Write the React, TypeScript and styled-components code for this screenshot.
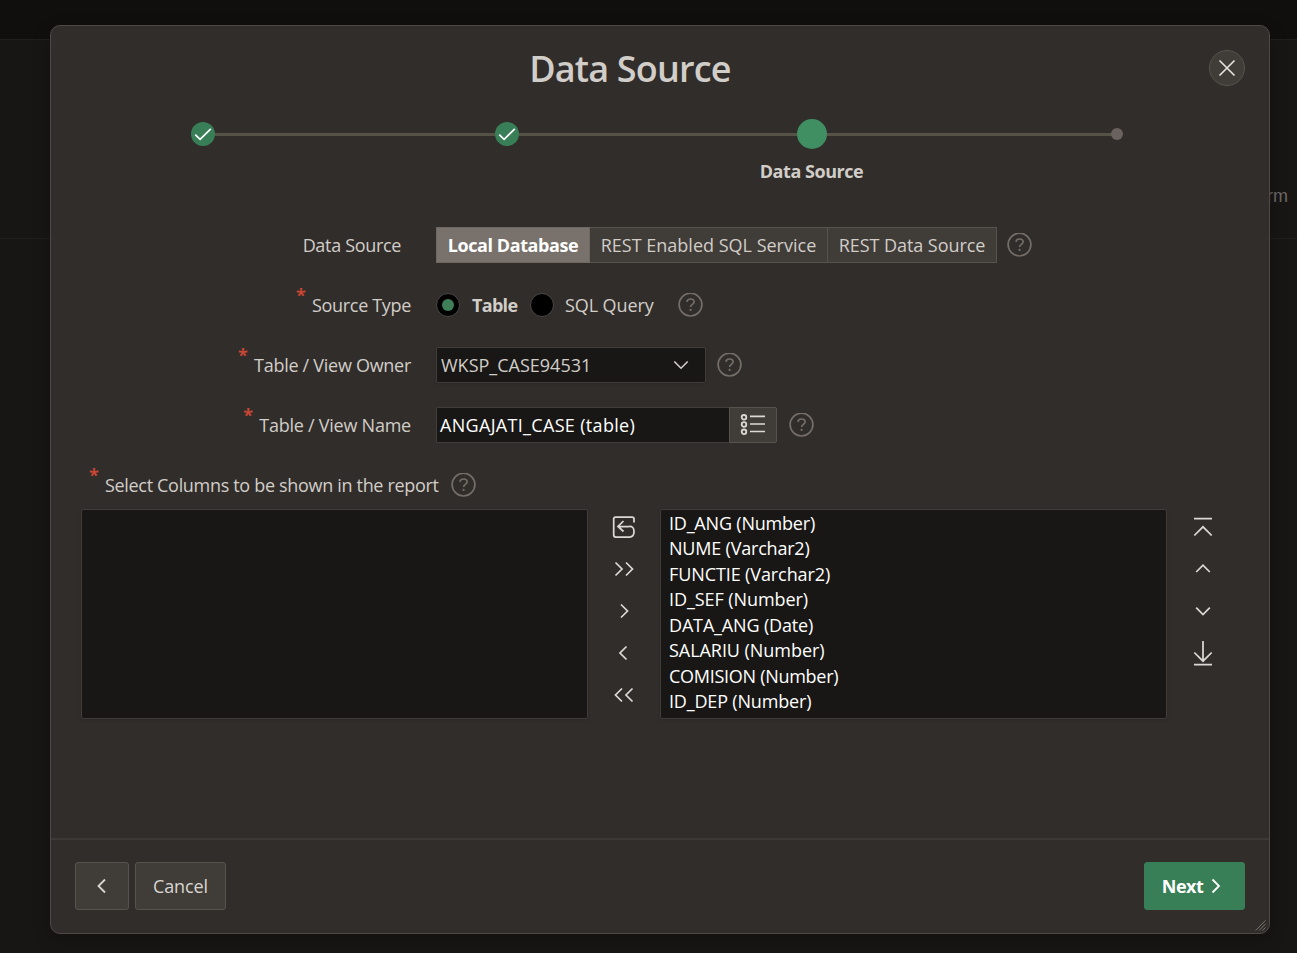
import React from 'react';
import styled, { createGlobalStyle, css } from 'styled-components';

const GlobalStyle = createGlobalStyle`
  * { box-sizing: border-box; }
  html, body, #root { margin: 0; height: 100%; }
  body {
    background: #171513;
    color: #d1cdc9;
    font-family: "Open Sans", "Noto Sans", sans-serif;
    font-size: 18px;
    overflow: hidden;
  }
  button, input { font: inherit; color: inherit; }
`;

const Screen = styled.div`
  position: relative;
  width: 1297px;
  height: 953px;
  overflow: hidden;
  background: #181614;
`;

const TopBar = styled.div`
  height: 40px;
  background: #110f0d;
  border-bottom: 1px solid #211f1d;
`;

const Banner = styled.div`
  height: 199px;
  padding: 0 9px 32px 0;
  display: flex;
  align-items: flex-end;
  justify-content: flex-end;
  border-bottom: 1px solid #211f1d;
  color: #6c6865;
  font-family: "Liberation Sans", Arial, sans-serif;
`;

const BannerText = styled.span`
  line-height: 20px;
`;

const Dialog = styled.section`
  position: absolute;
  left: 50px;
  top: 25px;
  width: 1220px;
  height: 909px;
  display: flex;
  flex-direction: column;
  border: 1px solid #4f4845;
  border-radius: 10px;
  background: #312d2a;
  box-shadow: 0 6px 18px rgba(0, 0, 0, 0.22);
`;

const Header = styled.header`
  display: flex;
  align-items: center;
  gap: 24px;
  height: 84px;
  padding: 0 24px;
`;

const Title = styled.h1`
  flex: 1;
  margin: 0;
  padding-top: 2px;
  text-align: center;
  font-size: 36px;
  font-weight: 600;
  line-height: 48px;
  letter-spacing: -0.82px;
`;

const CloseButton = styled.button`
  width: 36px;
  height: 36px;
  padding: 0;
  display: grid;
  place-items: center;
  border: 1px solid #57534c;
  border-radius: 50%;
  background: #403c37;
  color: #e2dfdc;
`;

const Steps = styled.ol`
  display: grid;
  grid-template-columns: 304px 304px 305px 305px;
  margin: 8px 0 0;
  padding: 0;
  list-style: none;
`;

const Step = styled.li`
  display: flex;
  flex-direction: column;
  align-items: center;
  gap: 9px;
`;

const Track = styled.div`
  display: flex;
  align-items: center;
  width: 100%;
  height: 32px;
`;

const Line = styled.span<{ $hidden?: boolean }>`
  flex: 1;
  height: 3px;
  margin: 1px -1px 0;
  background: ${(p) => (p.$hidden ? 'transparent' : '#565248')};
`;

const markerLook = {
  done: css`width: 24px; height: 24px; background: #387f57;`,
  current: css`width: 30px; height: 30px; background: #3f8f63;`,
  todo: css`width: 12px; height: 12px; background: #6a625e;`,
};

const Marker = styled.span<{ $state: keyof typeof markerLook }>`
  z-index: 1;
  display: grid;
  place-items: center;
  border-radius: 50%;
  color: #fff;
  ${(p) => markerLook[p.$state]}
`;

const StepLabel = styled.span`
  font-weight: 700;
  line-height: 24px;
  letter-spacing: -0.45px;
`;

const Form = styled.div`
  flex: 1;
  padding-top: 32px;
`;

const Field = styled.div`
  display: grid;
  grid-template-columns: 360px 1fr;
  column-gap: 25px;
  height: 60px;
`;

const LabelCell = styled.div<{ $inset?: number }>`
  display: flex;
  align-items: center;
  justify-content: flex-end;
  gap: 6px;
  padding-right: ${(p) => p.$inset ?? 0}px;
`;

const Label = styled.span<{ $spacing?: number }>`
  white-space: nowrap;
  line-height: 24px;
  letter-spacing: ${(p) => p.$spacing ?? 0}px;
`;

const Required = styled.span`
  align-self: flex-start;
  padding-top: 7px;
  width: 10px;
  color: #c74634;
  font-size: 18px;
  font-weight: 700;
  line-height: 26px;
`;

const Control = styled.div<{ $gap: number }>`
  display: flex;
  align-items: center;
  gap: ${(p) => p.$gap}px;
`;

const Segments = styled.div`
  display: flex;
  height: 36px;
`;

const Segment = styled.button<{ $width: number; $spacing?: number; $active?: boolean }>`
  width: ${(p) => p.$width}px;
  padding: 0;
  white-space: nowrap;
  line-height: 24px;
  letter-spacing: ${(p) => p.$spacing ?? 0}px;
  border: 1px solid #57534c;
  background: #403c37;
  & + & { border-left-width: 0; }
  ${(p) =>
    p.$active &&
    css`
      border-color: #6f6761;
      background: #79716b;
      color: #fff;
      font-weight: 700;
    `}
`;

const RadioOption = styled.label<{ $width: number; $selected?: boolean; $spacing?: number }>`
  display: flex;
  align-items: center;
  gap: ${(p) => (p.$selected ? 12 : 11)}px;
  width: ${(p) => p.$width}px;
  white-space: nowrap;
  line-height: 24px;
  font-weight: ${(p) => (p.$selected ? 700 : 400)};
  letter-spacing: ${(p) => p.$spacing ?? 0}px;
`;

const RadioMark = styled.span<{ $selected?: boolean }>`
  flex: none;
  display: grid;
  place-items: center;
  width: 24px;
  height: 24px;
  border: 1px solid #4d4845;
  border-radius: 50%;
  background: #000;
  &::after {
    content: '';
    width: 12px;
    height: 12px;
    border-radius: 50%;
    background: ${(p) => (p.$selected ? '#3f8059' : 'transparent')};
  }
`;

const SelectBox = styled.div`
  display: flex;
  align-items: center;
  justify-content: space-between;
  width: 270px;
  height: 36px;
  padding: 0 16px 0 4px;
  border: 1px solid #413d3a;
  border-radius: 2px;
  background: #191715;
  box-shadow: 0 1px 3px rgba(0, 0, 0, 0.14);
`;

const InputGroup = styled.div`
  display: flex;
  width: 341px;
  height: 36px;
`;

const ValueBox = styled.div`
  flex: 1;
  padding: 0 3px;
  border: 1px solid #413d3a;
  border-right: 0;
  border-radius: 2px 0 0 2px;
  background: #191715;
  color: #fff;
  line-height: 34px;
  letter-spacing: 0.32px;
  white-space: nowrap;
`;

const LovButton = styled.button`
  width: 48px;
  padding: 0;
  display: grid;
  place-items: center;
  border: 1px solid #57534c;
  border-radius: 0 2px 2px 0;
  background: #403c37;
`;

const ShuttleHeading = styled.div`
  display: flex;
  align-items: center;
  gap: 6px;
  height: 60px;
  padding-left: 38px;
`;

const HelpSlot = styled.span`
  display: flex;
  margin-left: 6px;
`;

const Shuttle = styled.div`
  display: flex;
  height: 210px;
  margin-top: -6px;
  padding-left: 30px;
`;

const ListBox = styled.ul`
  width: 507px;
  margin: 0;
  padding: 0.75px 8px;
  list-style: none;
  border: 1px solid #403c39;
  border-radius: 2px;
  background: #191715;
  color: #fff;
  box-shadow: 0 1px 3px rgba(0, 0, 0, 0.14);
`;

const Option = styled.li<{ $spacing?: number }>`
  height: 25.5px;
  line-height: 25.5px;
  white-space: nowrap;
  letter-spacing: ${(p) => p.$spacing ?? 0}px;
`;

const ButtonColumn = styled.div`
  display: flex;
  flex-direction: column;
  width: 72px;
`;

const IconButton = styled.button`
  display: grid;
  place-items: center;
  width: 100%;
  height: 42px;
  padding: 1px 0 0;
  border: 0;
  background: none;
  color: #dcd8d4;
  &:first-child { height: 38px; padding: 0 0 3px; }
`;

const Footer = styled.footer`
  display: flex;
  align-items: center;
  gap: 6px;
  height: 95px;
  padding: 0 24px 2px;
  border-top: 2px solid #3c3835;
`;

const FooterButton = styled.button<{ $width: number; $primary?: boolean }>`
  display: flex;
  align-items: center;
  justify-content: center;
  gap: 8px;
  width: ${(p) => p.$width}px;
  height: 48px;
  padding: 0 ${(p) => (p.$primary ? 6 : 0)}px 0 0;
  border: 1px solid ${(p) => (p.$primary ? '#387f57' : '#57534c')};
  border-radius: 3px;
  background: ${(p) => (p.$primary ? '#387f57' : '#403c37')};
  color: ${(p) => (p.$primary ? '#fff' : '#d9d5d1')};
  font-weight: ${(p) => (p.$primary ? 700 : 400)};
  letter-spacing: ${(p) => (p.$primary ? -0.5 : -0.1)}px;
  margin-left: ${(p) => (p.$primary ? 'auto' : '0')};
`;

const ResizeGrip = styled.div`
  position: absolute;
  right: 1px;
  bottom: 1px;
  display: flex;
`;

type GlyphProps = { w: number; h: number; d: string; stroke?: number };

const Glyph = ({ w, h, d, stroke = 1.75 }: GlyphProps) => (
  <svg width={w} height={h} viewBox={`0 0 ${w} ${h}`} fill="none" stroke="currentColor" strokeWidth={stroke}>
    <path d={d} />
  </svg>
);

const HelpIcon = () => (
  <svg width="25" height="25" viewBox="0 0 25 25" fill="none" stroke="#746d68" strokeWidth="1.7">
    <circle cx="12.5" cy="11.6" r="11.4" />
    <path d="M9 8.9C9.1 7 10.5 6 12.5 6s3.6 1.1 3.6 2.9c0 2.4-3.5 2.5-3.5 5" />
    <circle cx="12.6" cy="16.9" r="1.1" fill="#746d68" stroke="none" />
  </svg>
);

const CheckIcon = () => <Glyph w={24} h={24} d="M4.2 12.6 9.1 17.3 19.8 6.8" stroke={1.7} />;

const LovIcon = () => (
  <svg width="26" height="24" viewBox="0 0 26 24" fill="none" stroke="#dcd8d4" strokeWidth="1.8">
    <circle cx="4" cy="4.3" r="2.3" />
    <circle cx="4" cy="11.5" r="2.3" />
    <circle cx="4" cy="18.8" r="2.3" />
    <path d="M10 3.4h15M10 11h15M10 18.5h15" strokeWidth="1.6" />
  </svg>
);

const steps: { state: keyof typeof markerLook; label?: string }[] = [
  { state: 'done' },
  { state: 'done' },
  { state: 'current', label: 'Data Source' },
  { state: 'todo' },
];

const columns: [string, number][] = [
  ['ID_ANG (Number)', -0.2],
  ['NUME (Varchar2)', -0.2],
  ['FUNCTIE (Varchar2)', -0.1],
  ['ID_SEF (Number)', -0.07],
  ['DATA_ANG (Date)', -0.16],
  ['SALARIU (Number)', -0.05],
  ['COMISION (Number)', -0.28],
  ['ID_DEP (Number)', -0.17],
];

const moveGlyphs: GlyphProps[] = [
  { w: 24, h: 24, d: 'M22 7.5V4q0-2-2-2H3.500Q1.700 2 1.700 4v16q0 2 2 2H17.500q4.500 0 4.500-5.500t-5-5H6M11.500 6 6 11.500l5.500 5' },
  { w: 20, h: 16, d: 'M1.500 1.500 8 8l-6.500 6.500M12 1.500 18.500 8 12 14.500' },
  { w: 20, h: 16, d: 'M7 1.500 13.500 8 7 14.500' },
  { w: 20, h: 16, d: 'M12.500 1.500 6 8l6.500 6.500' },
  { w: 20, h: 16, d: 'M8 1.500 1.500 8 8 14.500M18.500 1.500 12 8l6.500 6.500' },
];

const orderGlyphs: GlyphProps[] = [
  { w: 20, h: 22, d: 'M1 2.500h18M1.300 19.500 10 10.800l8.700 8.700' },
  { w: 20, h: 16, d: 'M3.200 11 10 4.200l6.800 6.800' },
  { w: 20, h: 16, d: 'M3.200 4.700 10 11.500l6.800-6.800' },
  { w: 20, h: 26, d: 'M10 1v20M1.300 12.500 10 21.200l8.700-8.700M1 24.500h18' },
];

export default function App() {
  return (
    <Screen>
      <GlobalStyle />
      <TopBar />
      <Banner>
        <BannerText>rm</BannerText>
      </Banner>
      <Dialog>
        <Header>
          <Title>Data Source</Title>
          <CloseButton aria-label="Close">
            <Glyph w={18} h={18} d="M1.500 1.500 16.500 16.500M16.500 1.500 1.500 16.500" stroke={1.7} />
          </CloseButton>
        </Header>

        <Steps>
          {steps.map((step, i) => (
            <Step key={i}>
              <Track>
                <Line $hidden={i === 0} />
                <Marker $state={step.state}>{step.state === 'done' && <CheckIcon />}</Marker>
                <Line $hidden={i === steps.length - 1} />
              </Track>
              {step.label && <StepLabel>{step.label}</StepLabel>}
            </Step>
          ))}
        </Steps>

        <Form>
          <Field>
            <LabelCell $inset={10}>
              <Label $spacing={-0.33}>Data Source</Label>
            </LabelCell>
            <Control $gap={10}>
              <Segments>
                <Segment $width={154} $spacing={-0.43} $active>Local Database</Segment>
                <Segment $width={238}>REST Enabled SQL Service</Segment>
                <Segment $width={169} $spacing={-0.06}>REST Data Source</Segment>
              </Segments>
              <HelpIcon />
            </Control>
          </Field>
          <Field>
            <LabelCell>
              <Required>*</Required>
              <Label $spacing={-0.33}>Source Type</Label>
            </LabelCell>
            <Control $gap={0}>
              <RadioOption $width={94} $selected $spacing={-0.7}>
                <RadioMark $selected />
                Table
              </RadioOption>
              <RadioOption $width={148} $spacing={-0.1}>
                <RadioMark />
                SQL Query
              </RadioOption>
              <HelpIcon />
            </Control>
          </Field>
          <Field>
            <LabelCell>
              <Required>*</Required>
              <Label $spacing={-0.28}>Table / View Owner</Label>
            </LabelCell>
            <Control $gap={11}>
              <SelectBox>
                <span>WKSP_CASE94531</span>
                <Glyph w={16} h={10} d="M1.300 1.500 8 8.200l6.700-6.700" stroke={1.6} />
              </SelectBox>
              <HelpIcon />
            </Control>
          </Field>
          <Field>
            <LabelCell>
              <Required>*</Required>
              <Label $spacing={-0.24}>Table / View Name</Label>
            </LabelCell>
            <Control $gap={11.5}>
              <InputGroup>
                <ValueBox>ANGAJATI_CASE (table)</ValueBox>
                <LovButton aria-label="Choose table">
                  <LovIcon />
                </LovButton>
              </InputGroup>
              <HelpIcon />
            </Control>
          </Field>

          <ShuttleHeading>
            <Required>*</Required>
            <Label $spacing={-0.32}>Select Columns to be shown in the report</Label>
            <HelpSlot>
              <HelpIcon />
            </HelpSlot>
          </ShuttleHeading>
          <Shuttle>
            <ListBox />
            <ButtonColumn>
              {moveGlyphs.map((g, i) => (
                <IconButton key={i}>
                  <Glyph {...g} />
                </IconButton>
              ))}
            </ButtonColumn>
            <ListBox>
              {columns.map(([name, spacing]) => (
                <Option key={name} $spacing={spacing}>
                  {name}
                </Option>
              ))}
            </ListBox>
            <ButtonColumn>
              {orderGlyphs.map((g, i) => (
                <IconButton key={i}>
                  <Glyph {...g} />
                </IconButton>
              ))}
            </ButtonColumn>
          </Shuttle>
        </Form>

        <Footer>
          <FooterButton $width={54} aria-label="Back">
            <Glyph w={10} h={16} d="M8 1.500 1.500 8 8 14.500" stroke={1.8} />
          </FooterButton>
          <FooterButton $width={91}>Cancel</FooterButton>
          <FooterButton $width={101} $primary>
            Next
            <Glyph w={10} h={16} d="M1.500 1.500 8 8l-6.500 6.500" stroke={1.8} />
          </FooterButton>
        </Footer>
        <ResizeGrip>
          <svg width="14" height="14" viewBox="0 0 14 14" stroke="#77716c" strokeWidth="1">
            <path d="M1.500 12.500 11.500 2.500M5 12.500 11.500 6M8.500 12.500 11.500 9.500" />
          </svg>
        </ResizeGrip>
      </Dialog>
    </Screen>
  );
}
